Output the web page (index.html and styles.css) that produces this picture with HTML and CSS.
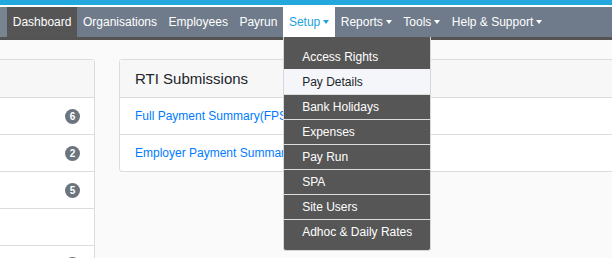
FILE: index.html
```html
<!DOCTYPE html>
<html>
<head>
<meta charset="utf-8">
<link rel="stylesheet" href="styles.css">
</head>
<body>
<div class="topline"></div>
<nav class="nav">
  <a class="item active">Dashboard</a>
  <a class="item">Organisations</a>
  <a class="item">Employees</a>
  <a class="item">Payrun</a>
  <div class="dd">
    <a class="item open">Setup<span class="caret"></span></a>
    <div class="menu">
      <a class="mi">Access Rights</a>
      <a class="mi hover">Pay Details</a>
      <a class="mi">Bank Holidays</a>
      <a class="mi">Expenses</a>
      <a class="mi">Pay Run</a>
      <a class="mi">SPA</a>
      <a class="mi">Site Users</a>
      <a class="mi">Adhoc &amp; Daily Rates</a>
    </div>
  </div>
  <a class="item">Reports<span class="caret"></span></a>
  <a class="item">Tools<span class="caret"></span></a>
  <a class="item">Help &amp; Support<span class="caret"></span></a>
</nav>
<main class="content">
  <section class="card left">
    <div class="card-head"></div>
    <div class="row"><span class="badge">6</span></div>
    <div class="row"><span class="badge">2</span></div>
    <div class="row"><span class="badge">5</span></div>
    <div class="row"></div>
    <div class="row"><span class="badge">3</span></div>
  </section>
  <section class="card right">
    <div class="card-head"><span class="title">RTI Submissions</span></div>
    <div class="row"><a class="link">Full Payment Summary(FPS)</a></div>
    <div class="row"><a class="link">Employer Payment Summary(EPS)</a></div>
  </section>
</main>
</body>
</html>
```

FILE: styles.css
```css
* { box-sizing: border-box; }
html, body { margin: 0; padding: 0; }
body {
  width: 612px;
  height: 258px;
  overflow: hidden;
  background: #fafafa;
  font-family: "Liberation Sans", Arial, sans-serif;
  font-size: 12px;
  color: #212529;
}
.topline {
  height: 7px;
  background: #22a8dd;
  border-bottom: 2px solid #ffffff;
}
.nav {
  height: 33px;
  display: flex;
  align-items: stretch;
  padding-left: 7px;
  background: #6f7b8b;
  border-bottom: 3px solid #545454;
  box-shadow: inset 7px 0 0 #78848f;
  position: relative;
  z-index: 5;
}
.item {
  display: flex;
  align-items: center;
  padding: 0 5.75px;
  color: #ffffff;
  white-space: nowrap;
  height: 30px;
}
.item.active { background: #555555; }
.item.open { background: #ffffff; color: #22a2d8; }
.caret {
  display: inline-block;
  margin-left: 3px;
  width: 0;
  height: 0;
  border-left: 3.5px solid transparent;
  border-right: 3.5px solid transparent;
  border-top: 4px solid currentColor;
}
.dd { position: relative; display: flex; }
.menu {
  position: absolute;
  left: 0;
  top: 30px;
  width: 148px;
  background: #565656;
  border: 1px solid #d8d8d8;
  border-top: none;
  border-radius: 0 0 3px 3px;
  padding: 7px 0 6px;
  display: flex;
  flex-direction: column;
}
.mi {
  height: 25px;
  display: flex;
  align-items: center;
  padding-left: 18px;
  color: #ffffff;
  border-top: 1px solid #dcdcdc;
  white-space: nowrap;
}
.mi:first-child { border-top: none; height: 25px; }
.mi.hover { background: #f4f6f9; color: #212529; border-top-color: #f4f6f9; }
.content {
  display: flex;
  gap: 24px;
  padding-top: 19px;
  margin-left: -106px;
  align-items: flex-start;
}
.card {
  background: #ffffff;
  border: 1px solid #dcdcdc;
  border-radius: 3px;
  flex: none;
}
.card.left { width: 201px; }
.card.right { width: 600px; }
.card-head {
  height: 37px;
  background: #f7f7f7;
  display: flex;
  align-items: center;
  padding-left: 15px;
}
.title { font-size: 15px; color: #212529; }
.row {
  height: 37px;
  border-top: 1px solid #dcdcdc;
  display: flex;
  align-items: center;
  padding-left: 15px;
}
.card.left .row { justify-content: flex-end; padding-right: 14px; }
.badge {
  width: 15px;
  height: 15px;
  border-radius: 50%;
  background: #6c757d;
  color: #ffffff;
  font-size: 10px;
  font-weight: bold;
  display: flex;
  align-items: center;
  justify-content: center;
}
.link { color: #007bff; white-space: nowrap; }
```
